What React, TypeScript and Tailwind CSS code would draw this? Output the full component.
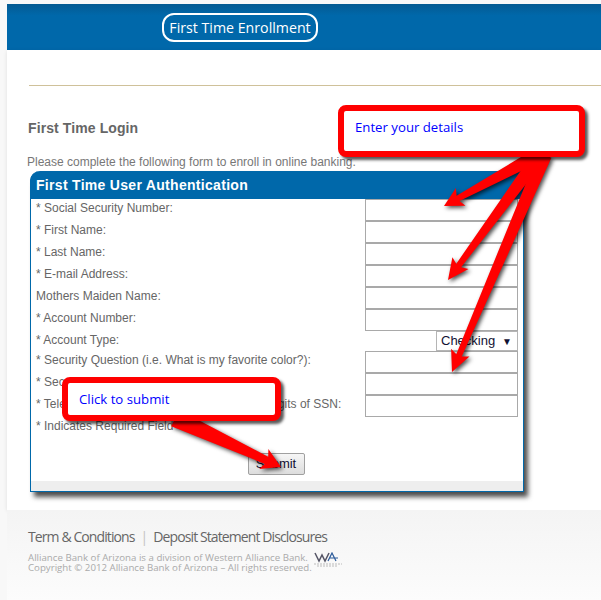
import React from "react";

const fields = [
  { label: "* Social Security Number:" },
  { label: "* First Name:" },
  { label: "* Last Name:" },
  { label: "* E-mail Address:" },
  { label: "Mothers Maiden Name:" },
  { label: "* Account Number:" },
  { label: "* Account Type:", select: true },
  { label: "* Security Question (i.e. What is my favorite color?):" },
  { label: "* Security Answer:" },
  { label: "* Telephone Banking Access Code or last 4 digits of SSN:" },
];

// tapered arrow outline, from tail to tip
const arrowPoints = (x1: number, y1: number, x2: number, y2: number, tail = 9, neck = 5, headLen = 24, headW = 12) => {
  const len = Math.hypot(x2 - x1, y2 - y1);
  const ux = (x2 - x1) / len;
  const uy = (y2 - y1) / len;
  const px = -uy;
  const py = ux;
  const nx = x2 - ux * headLen;
  const ny = y2 - uy * headLen;
  const bx = x2 - ux * (headLen + 3);
  const by = y2 - uy * (headLen + 3);
  const pts = [
    [x1 + px * tail, y1 + py * tail],
    [nx + px * neck, ny + py * neck],
    [bx + px * headW, by + py * headW],
    [x2, y2],
    [bx - px * headW, by - py * headW],
    [nx - px * neck, ny - py * neck],
    [x1 - px * tail, y1 - py * tail],
  ];
  return pts.map((p) => p.map((n) => n.toFixed(1)).join(",")).join(" ");
};

const Callout: React.FC<{ text: string; className: string; textClass: string }> = ({ text, className, textClass }) => (
  <div className={`absolute bg-white border-[6px] border-[#ff0000] rounded-[8px] shadow-[3px_3px_3px_rgba(0,0,0,0.65)] ${className}`}>
    <span className={`absolute text-[13.2px] leading-[18px] text-[#0000ff] font-['Open_Sans',sans-serif] ${textClass}`}>{text}</span>
  </div>
);

const App: React.FC = () => {
  return (
    <div className="relative w-[601px] h-[600px] overflow-hidden bg-[#f8f8f8] font-['Liberation_Sans',Arial,sans-serif]">
      <div className="flex h-full flex-col pl-[7px] pt-[4px]">
        <header className="h-[46px] shrink-0 bg-[#0066a8] bg-gradient-to-b from-[#045a92] via-[#0068aa] via-[25%] to-[#0068aa] pl-[155px] pt-[9px]">
          <div className="flex h-[29px] w-[156px] items-center justify-center rounded-[12px] border-2 border-white font-['Open_Sans',sans-serif] text-[14.2px] text-white">
            First Time Enrollment
          </div>
        </header>

        <main className="h-[460px] shrink-0 bg-white pl-[20px] shadow-[0_1px_4px_rgba(0,0,0,0.1)]">
          <div className="mt-[35px] h-px bg-[#cfc19a] ml-[2px]" />
          <h1 className="mt-[34px] pl-px text-[14px] leading-[16px] font-bold tracking-[0.1px] text-[#666666]">First Time Login</h1>
          <p className="mt-[19px] text-[12px] leading-[14px] text-[#777777]">
            Please complete the following form to enroll in online banking.
          </p>

          <section className="ml-[3px] mt-[2px] flex h-[321px] w-[494px] flex-col rounded-tl-[10px] border-x border-b border-[#0068aa] bg-white shadow-[4px_5px_5px_rgba(0,0,0,0.7)]">
            <h2 className="flex h-[28px] shrink-0 items-center rounded-tl-[10px] bg-[#0068aa] pl-[6px] text-[14px] font-bold tracking-[0.3px] text-white -mx-px">
              First Time User Authentication
            </h2>
            <div className="flex flex-col">
              {fields.map((f) => (
                <div key={f.label} className={`flex items-start ${f.select ? "h-[20px]" : "h-[22px]"}`}>
                  <span className="w-[334px] whitespace-nowrap pl-[5px] pt-[2px] text-[12px] leading-[14px] text-[#666666]">{f.label}</span>
                  {f.select ? (
                    <div className="ml-[71px] flex h-[20px] w-[82px] items-center justify-between border border-[#b5b5b5] pl-[4px] pr-[5px] text-[13px] text-[#111133]">
                      <span>Checking</span>
                      <span className="text-[10px]">▼</span>
                    </div>
                  ) : (
                    <div className="h-[22px] w-[153px] border border-[#a9a9a9]" />
                  )}
                </div>
              ))}
            </div>
            <p className="mt-[2px] pl-[5px] text-[12px] leading-[14px] text-[#666666]">* Indicates Required Field</p>
            <div className="mt-[20px] flex justify-center pr-[2px]">
              <div className="flex h-[22px] w-[57px] items-center justify-center rounded-[2px] border border-[#a0a0a0] bg-gradient-to-b from-[#f6f6f6] to-[#dddddd] text-[13px] text-[#111133]">
                Submit
              </div>
            </div>
            <div className="mt-auto h-[10px] bg-[#eeeeee]" />
          </section>
        </main>

        <footer className="flex-1 bg-gradient-to-b from-[#f4f4f4] to-[#fcfcfc] pl-[21px] pt-[18px]">
          <div className="flex items-center font-['Open_Sans',sans-serif] text-[14px] leading-[18px] tracking-[-0.9px] text-[#666666]">
            <span>Term &amp; Conditions</span>
            <span className="mx-[6px] text-[#c4c4c4]">|</span>
            <span>Deposit Statement Disclosures</span>
          </div>
          <div className="relative mt-[7px] font-['Open_Sans',sans-serif] text-[9.7px] leading-[10px] text-[#aaaaaa]">
            <p>Alliance Bank of Arizona is a division of Western Alliance Bank.</p>
            <p>Copyright © 2012 Alliance Bank of Arizona – All rights reserved.</p>
            <svg className="absolute left-[286px] top-[-1px]" width="28" height="16" viewBox="0 0 28 16">
              <path d="M1 1l4 8 3-6 3 6 4-8" fill="none" stroke="#555566" strokeWidth="1.5" />
              <path d="M14 9l4-8 4 8M16 6h8" fill="none" stroke="#2a5a9a" strokeWidth="1.2" />
              <path d="M0 12h28M3 14h20" stroke="#bbbbbb" strokeWidth="1" strokeDasharray="2 1" />
            </svg>
          </div>
        </footer>
      </div>

      <svg className="pointer-events-none absolute left-0 top-0 drop-shadow-[2px_2px_2px_rgba(0,0,0,0.7)]" width="601" height="600" viewBox="0 0 601 600">
        <g fill="#ff0000">
          <polygon points={arrowPoints(538, 155, 444, 206, 7, 3, 16, 10)} />
          <polygon points={arrowPoints(540, 155, 448, 280, 7, 3, 18, 10)} />
          <polygon points={arrowPoints(545, 155, 452, 372, 7, 3, 18, 10)} />
          <polygon points={arrowPoints(175, 418, 281, 467, 9, 4, 16, 11)} />
        </g>
      </svg>

      <Callout text="Enter your details" className="left-[338px] top-[105px] h-[52px] w-[247px]" textClass="left-[11px] top-[7px]" />
      <Callout text="Click to submit" className="left-[62px] top-[377px] h-[44px] w-[219px]" textClass="left-[11px] top-[7px]" />
    </div>
  );
};

export default App;
